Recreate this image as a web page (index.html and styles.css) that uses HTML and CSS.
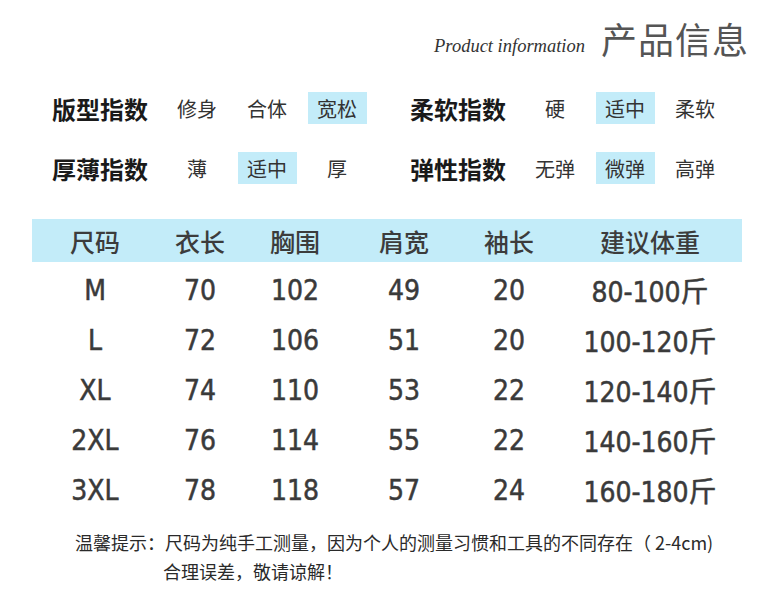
FILE: index.html
```html
<!DOCTYPE html>
<html lang="zh">
<head>
<meta charset="utf-8">
<link rel="stylesheet" href="styles.css">
</head>
<body>
<div class="page">
  <div class="title">
    <span class="title-en">Product information</span>
    <span class="title-cn">产品信息</span>
  </div>

  <div class="indices">
    <div class="index-row">
      <div class="group">
        <span class="label">版型指数</span>
        <span class="opt">修身</span>
        <span class="opt">合体</span>
        <span class="opt"><span class="hl">宽松</span></span>
      </div>
      <div class="group">
        <span class="label">柔软指数</span>
        <span class="opt">硬</span>
        <span class="opt"><span class="hl">适中</span></span>
        <span class="opt">柔软</span>
      </div>
    </div>
    <div class="index-row">
      <div class="group">
        <span class="label">厚薄指数</span>
        <span class="opt">薄</span>
        <span class="opt"><span class="hl">适中</span></span>
        <span class="opt">厚</span>
      </div>
      <div class="group">
        <span class="label">弹性指数</span>
        <span class="opt">无弹</span>
        <span class="opt"><span class="hl">微弹</span></span>
        <span class="opt">高弹</span>
      </div>
    </div>
  </div>

  <div class="table">
    <div class="thead">
      <span>尺码</span><span>衣长</span><span>胸围</span><span>肩宽</span><span>袖长</span><span>建议体重</span>
    </div>
    <div class="trow"><span>M</span><span>70</span><span>102</span><span>49</span><span>20</span><span>80-100斤</span></div>
    <div class="trow"><span>L</span><span>72</span><span>106</span><span>51</span><span>20</span><span>100-120斤</span></div>
    <div class="trow"><span>XL</span><span>74</span><span>110</span><span>53</span><span>22</span><span>120-140斤</span></div>
    <div class="trow"><span>2XL</span><span>76</span><span>114</span><span>55</span><span>22</span><span>140-160斤</span></div>
    <div class="trow"><span>3XL</span><span>78</span><span>118</span><span>57</span><span>24</span><span>160-180斤</span></div>
  </div>

  <div class="note">
    <p class="note-line">温馨提示：尺码为纯手工测量，因为个人的测量习惯和工具的不同存在（ 2-4cm)</p>
    <p class="note-line indent">合理误差，敬请谅解！</p>
  </div>
</div>
</body>
</html>
```

FILE: styles.css
```css
* { box-sizing: border-box; }
html, body { margin: 0; padding: 0; background: #fff; }
body {
  font-family: "Noto Sans", "Noto Sans CJK SC", sans-serif;
  color: #333;
  width: 770px;
  height: 596px;
  overflow: hidden;
}

.title {
  display: flex;
  justify-content: flex-end;
  align-items: baseline;
  gap: 16px;
  padding: 14px 21px 0 0;
  height: 70px;
}
.title-en {
  font-family: "Liberation Serif", "DejaVu Serif", serif;
  font-style: italic;
  font-size: 18.5px;
  color: #333;
  position: relative;
  top: -2px;
}
.title-cn {
  font-family: "Noto Sans CJK SC", sans-serif;
  font-size: 36px;
  line-height: 48px;
  color: #555;
  letter-spacing: 1px;
}

.indices {
  padding-left: 52px;
  padding-top: 8px;
}
.index-row {
  display: flex;
  gap: 38px;
  height: 60px;
  align-items: center;
}
.group {
  display: flex;
  align-items: center;
}
.label {
  width: 96px;
  margin-right: 14px;
  font-family: "Noto Sans CJK SC", sans-serif;
  font-weight: 700;
  font-size: 24px;
  color: #1a1a1a;
  white-space: nowrap;
}
.opt {
  width: 70px;
  display: flex;
  justify-content: center;
  align-items: center;
  font-family: "Noto Sans CJK SC", sans-serif;
  font-size: 20px;
  color: #333;
  height: 32px;
}
.hl {
  display: flex;
  justify-content: center;
  align-items: center;
  width: 59px;
  height: 32px;
  background: #c3ecf9;
}

.table {
  margin: 21px 0 0 32px;
  width: 710px;
}
.thead, .trow {
  display: grid;
  grid-template-columns: 126px 84px 106px 112px 98px 184px;
  text-align: center;
  align-items: center;
}
.thead {
  height: 43px;
  background: #c3ecf9;
  font-family: "Noto Sans CJK SC", sans-serif;
  font-size: 25px;
  font-weight: 500;
  color: #3c3c3c;
}
.trow {
  height: 50px;
  font-family: "DejaVu Sans Condensed", "DejaVu Sans", "Noto Sans CJK SC", sans-serif;
  font-stretch: condensed;
  font-size: 28px;
  color: #3a3a3a;
  -webkit-text-stroke: 0.5px #3a3a3a;
}
.thead + .trow { margin-top: 3px; }

.note {
  margin-top: 13px;
  padding-left: 75px;
  font-family: "Noto Sans CJK SC", sans-serif;
  font-size: 18px;
  color: #2a2a2a;
}
.note-line {
  margin: 0;
  line-height: 29px;
  white-space: nowrap;
}
.indent { padding-left: 88px; }
```
